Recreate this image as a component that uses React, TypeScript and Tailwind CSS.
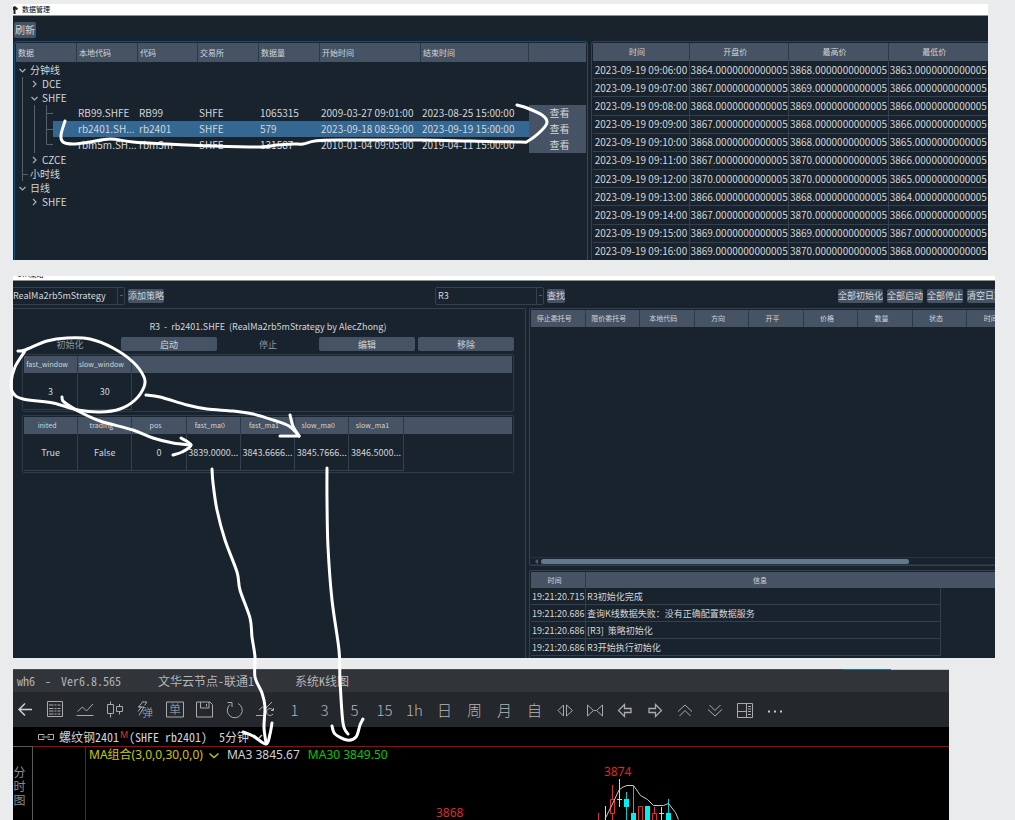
import React from "react";

type Point = [number, number];

/* ---------- Data manager ---------- */

const treeHeaders = ["数据", "本地代码", "代码", "交易所", "数据量", "开始时间", "结束时间", ""];

type TreeRow = {
  label?: string;
  depth?: number;
  guides: string;
  chevron?: string;
  cells?: string[];
  selected?: boolean;
};

const treeRows: TreeRow[] = [
  { label: "分钟线", depth: 0, guides: "", chevron: "M3.5 6l3 3 3-3" },
  { label: "DCE", depth: 1, guides: "M6.5 0V14", chevron: "M17 4l3 3-3 3" },
  { label: "SHFE", depth: 1, guides: "M6.5 0V14", chevron: "M15.5 6l3 3 3-3" },
  {
    guides: "M6.5 0V16M18.5 0V16M30.5 0V16M30.5 8.5H37",
    cells: ["RB99.SHFE", "RB99", "SHFE", "1065315", "2009-03-27 09:01:00", "2023-08-25 15:00:00"],
  },
  {
    guides: "M6.5 0V16M18.5 0V16M30.5 0V16M30.5 8.5H37",
    cells: ["rb2401.SH...", "rb2401", "SHFE", "579", "2023-09-18 08:59:00", "2023-09-19 15:00:00"],
    selected: true,
  },
  {
    guides: "M6.5 0V16M18.5 0V16M30.5 0V7.5H37",
    cells: ["rbm5m.SH...", "rbm5m", "SHFE", "131587", "2010-01-04 09:05:00", "2019-04-11 15:00:00"],
  },
  { label: "CZCE", depth: 1, guides: "M6.5 0V14", chevron: "M17 4l3 3-3 3" },
  { label: "小时线", depth: 0, guides: "M6.5 0V14M6.5 7.5H12" },
  { label: "日线", depth: 0, guides: "", chevron: "M3.5 6l3 3 3-3" },
  { label: "SHFE", depth: 1, guides: "", chevron: "M17 4l3 3-3 3" },
];

const bars = [
  ["06", 3864, 3868, 3863],
  ["07", 3867, 3869, 3866],
  ["08", 3868, 3869, 3866],
  ["09", 3867, 3868, 3866],
  ["10", 3868, 3868, 3865],
  ["11", 3867, 3870, 3866],
  ["12", 3870, 3870, 3865],
  ["13", 3866, 3868, 3864],
  ["14", 3867, 3870, 3866],
  ["15", 3869, 3869, 3867],
  ["16", 3869, 3870, 3868],
] as const;

function DataTree() {
  return (
    <div className="rounded-t-sm border border-b-0 border-[#17507f] p-px">
      <table className="w-full table-fixed border-separate border-spacing-0 text-left text-[10px] leading-none whitespace-nowrap">
        <colgroup>
          <col className="w-[61px]" />
          <col className="w-[61px]" />
          <col className="w-[60px]" />
          <col className="w-[61px]" />
          <col className="w-[61px]" />
          <col className="w-[101px]" />
          <col className="w-[108px]" />
          <col />
        </colgroup>
        <thead>
          <tr className="h-5 bg-[#455364] text-[8px]">
            {treeHeaders.map((h, i) => (
              <th
                key={i}
                className="border-r border-b border-r-[#2c3946] border-b-[#19232d] p-0 pl-0.5 font-normal last:border-r-0"
              >
                {h}
              </th>
            ))}
          </tr>
        </thead>
        <tbody>
          {treeRows.map((r, i) => (
            <tr key={i} className={r.cells ? "h-4" : "h-3.5"}>
              <td className="p-0" colSpan={r.cells ? 1 : 8}>
                <div className={r.cells ? "flex h-4 items-center" : "flex h-3.5 items-center"}>
                  <svg
                    className={
                      r.cells ? "h-4 w-[37px] shrink-0" : r.depth === 0 ? "h-3.5 w-3.5 shrink-0" : "h-3.5 w-[26px] shrink-0"
                    }
                    fill="none"
                    aria-hidden="true"
                  >
                    <path d={r.guides} stroke="#56616b" />
                    {r.chevron && <path d={r.chevron} stroke="#a9b0b6" strokeWidth="1.2" />}
                  </svg>
                  {r.cells ? (
                    <span className={r.selected ? "h-4 flex-1 bg-[#346792]" : "h-4 flex-1"} />
                  ) : (
                    <span>{r.label}</span>
                  )}
                </div>
              </td>
              {r.cells?.map((c, j) => (
                <td key={j} className={r.selected ? "bg-[#346792] p-0 pl-px" : "p-0 pl-px"}>
                  {c}
                </td>
              ))}
              {r.cells && (
                <td className="p-0">
                  <button type="button" className="block h-4 w-full bg-[#455364] pl-1 text-[10px] leading-none">
                    查看
                  </button>
                </td>
              )}
            </tr>
          ))}
        </tbody>
      </table>
    </div>
  );
}

function BarTable() {
  return (
    <div className="min-w-0 overflow-hidden rounded-tl-sm border-t border-l border-[#33414e] pt-px pl-px">
      <table className="h-[218px] w-full table-fixed border-separate border-spacing-0 text-center text-[10px] leading-none whitespace-nowrap">
        <colgroup>
          <col className="w-[97px]" />
          <col />
          <col />
          <col />
        </colgroup>
        <thead>
          <tr className="h-[18px] bg-[#455364] text-[8px]">
            {["时间", "开盘价", "最高价", "最低价"].map((h) => (
              <th key={h} className="border-r border-[#2c3946] p-0 pr-2 font-normal last:border-r-0">
                {h}
              </th>
            ))}
          </tr>
        </thead>
        <tbody>
          {bars.map(([m, ...prices]) => (
            <tr key={m}>
              <td className="border-r border-b border-[#33414e] p-0">{`2023-09-19 09:${m}:00`}</td>
              {prices.map((p, i) => (
                <td key={i} className="border-r border-b border-[#33414e] p-0 last:border-r-0">
                  {`${p}.0000000000005`}
                </td>
              ))}
            </tr>
          ))}
        </tbody>
      </table>
    </div>
  );
}

function DataManager() {
  return (
    <section className="mr-[27px] ml-[13px] h-64 overflow-hidden bg-[#19232d]">
      <header className="flex h-3 items-center gap-1 border-b border-[#8c948f] bg-white text-[7px] leading-none text-black">
        <svg className="h-2 w-[5px]" viewBox="0 0 5 8" aria-hidden="true">
          <path d="M0 1l2-1 3 2.5L4 4 2.500 3.500V8H.5V4L0 4z" fill="#222" />
        </svg>
        <h1>数据管理</h1>
      </header>
      <div className="pt-1.5 pb-[3px] pl-px">
        <button type="button" className="block h-4 w-[22px] rounded-xs bg-[#455364] text-center text-[10px] leading-none">
          刷新
        </button>
      </div>
      <div className="grid grid-cols-[574px_1fr] gap-[3px] pl-px">
        <DataTree />
        <BarTable />
      </div>
    </section>
  );
}

/* ---------- Strategy manager ---------- */

function ToolButton({ children }: { children: React.ReactNode }) {
  return (
    <button type="button" className="h-3.5 shrink-0 rounded-xs bg-[#455364] text-[9px] leading-none whitespace-nowrap">
      {children}
    </button>
  );
}

function Combo({ label, value, first }: { label: string; value: string; first?: boolean }) {
  return (
    <div
      className={
        first
          ? "flex h-[18px] w-[112px] shrink-0 rounded-r-xs border border-l-0 border-[#33414e]"
          : "flex h-[18px] w-[109px] shrink-0 rounded-xs border border-[#33414e]"
      }
    >
      <select
        aria-label={label}
        className={
          first
            ? "min-w-0 flex-1 appearance-none bg-transparent p-0 text-[9px] leading-4"
            : "min-w-0 flex-1 appearance-none bg-transparent p-0 pl-0.5 text-[9px] leading-4"
        }
      >
        <option>{value}</option>
      </select>
      <span className="flex w-[7px] items-center justify-center border-l border-[#33414e]">
        <span className="h-px w-[3px] bg-[#56616b]" />
      </span>
    </div>
  );
}

function ValueGrid({ columns, values }: { columns: string[]; values: string[] }) {
  const rest = 9 - columns.length;
  return (
    <div className="rounded-xs border border-[#2e3b48] p-px">
      <table className="w-full table-fixed border-separate border-spacing-0 text-center leading-none whitespace-nowrap">
        <colgroup>
          {Array.from({ length: 9 }, (_, i) => (
            <col key={i} className="w-1/9" />
          ))}
        </colgroup>
        <thead>
          <tr className="h-[17px] bg-[#455364] text-[7px]">
            {columns.map((c) => (
              <th key={c} className="border-r border-[#2c3946] p-0 pr-[7px] font-normal">
                {c}
              </th>
            ))}
            <td colSpan={rest} />
          </tr>
        </thead>
        <tbody>
          <tr className="h-[37px] text-[9px]">
            {values.map((v, i) => (
              <td key={i} className="border-r border-b border-[#33414e] p-0">
                {v}
              </td>
            ))}
            <td colSpan={rest} />
          </tr>
        </tbody>
      </table>
    </div>
  );
}

const actions = [
  { name: "初始化", enabled: false },
  { name: "启动", enabled: true },
  { name: "停止", enabled: false },
  { name: "编辑", enabled: true },
  { name: "移除", enabled: true },
];

const logs = [
  ["19:21:20.715", "R3初始化完成"],
  ["19:21:20.686", "查询K线数据失败：没有正确配置数据服务"],
  ["19:21:20.686", "[R3]  策略初始化"],
  ["19:21:20.686", "R3开始执行初始化"],
];

function StrategyManager() {
  return (
    <section className="mt-4 mr-5 ml-[13px] flex h-[382px] flex-col overflow-hidden bg-[#19232d]">
      <header className="flex h-[5px] shrink-0 items-end overflow-hidden border-b border-[#8c948f] bg-white pl-1 text-[7px] leading-none text-black">
        <span className="pb-0.5">CTA策略</span>
      </header>
      <div className="flex h-[27px] shrink-0 items-center gap-[3px] pt-0.5">
        <Combo label="策略类" value="RealMa2rb5mStrategy" first />
        <ToolButton>添加策略</ToolButton>
        <div className="ml-[268px] flex items-center gap-[3px]">
          <Combo label="策略实例" value="R3" />
          <ToolButton>查找</ToolButton>
        </div>
        <div className="-mr-2 ml-auto flex items-center gap-1">
          <ToolButton>全部初始化</ToolButton>
          <ToolButton>全部启动</ToolButton>
          <ToolButton>全部停止</ToolButton>
          <ToolButton>清空日志</ToolButton>
        </div>
      </div>
      <div className="grid min-h-0 flex-1 grid-cols-[513px_1fr] gap-[3px]">
        <div className="flex flex-col gap-[3px] rounded-tr-xs border-t border-r border-[#33414e] pr-[11px] pl-[9px]">
          <h2 className="pt-[13px] pb-0.5 text-center text-[9px] leading-[10px] whitespace-pre">
            R3  -  rb2401.SHFE  (RealMa2rb5mStrategy by AlecZhong)
          </h2>
          <div className="grid grid-cols-5 gap-[3px]">
            {actions.map((a) => (
              <button
                key={a.name}
                type="button"
                disabled={!a.enabled}
                className={
                  a.enabled
                    ? "h-3.5 rounded-xs bg-[#455364] text-[9px] leading-none"
                    : "h-3.5 text-[9px] leading-none text-[#8f979e]"
                }
              >
                {a.name}
              </button>
            ))}
          </div>
          <ValueGrid columns={["fast_window", "slow_window"]} values={["3", "30"]} />
          <ValueGrid
            columns={["inited", "trading", "pos", "fast_ma0", "fast_ma1", "slow_ma0", "slow_ma1"]}
            values={["True", "False", "0", "3839.0000...", "3843.6666...", "3845.7666...", "3846.5000..."]}
          />
        </div>
        <div className="flex min-w-0 flex-col gap-1 overflow-hidden">
          <div className="flex min-h-0 flex-1 flex-col justify-between rounded-l-xs border border-r-0 border-[#33414e] pt-px pl-px">
            <table className="w-[491px] table-fixed border-separate border-spacing-0 text-center text-[7px] leading-none whitespace-nowrap">
              <thead>
                <tr className="h-[17px] bg-[#455364]">
                  {["停止委托号", "限价委托号", "本地代码", "方向", "开平", "价格", "数量", "状态", "时间"].map((h) => (
                    <th key={h} className="border-r border-[#2c3946] p-0 pr-[7px] font-normal">
                      {h}
                    </th>
                  ))}
                </tr>
              </thead>
            </table>
            <div className="flex h-2 items-center gap-[3px] border-y border-[#26323e] pl-1">
              <svg className="h-[5px] w-[3px]" viewBox="0 0 3 5" aria-hidden="true">
                <path d="M3 0v5L0 2.500z" fill="#56616b" />
              </svg>
              <div className="h-[5px] w-4/5 rounded-full bg-[#60798b]" />
            </div>
          </div>
          <div className="h-[88px] shrink-0 overflow-hidden rounded-tl-xs border-t border-l border-[#33414e] pt-px pl-px">
            <table className="w-full table-fixed border-separate border-spacing-0 text-left text-[9px] leading-none whitespace-pre">
              <colgroup>
                <col className="w-[55px]" />
                <col />
                <col className="w-[54px]" />
              </colgroup>
              <thead>
                <tr className="h-4 bg-[#455364] text-center text-[7px]">
                  <th className="border-r border-[#2c3946] p-0 pr-[7px] font-normal">时间</th>
                  <th className="p-0 pr-[7px] font-normal">信息</th>
                  <td />
                </tr>
              </thead>
              <tbody>
                {logs.map(([t, m]) => (
                  <tr key={m} className="h-[17px]">
                    <td className="border-r border-b border-[#33414e] p-0 pl-px">{t}</td>
                    <td className="border-r border-b border-[#33414e] p-0 pl-px">{m}</td>
                    <td />
                  </tr>
                ))}
              </tbody>
            </table>
          </div>
        </div>
      </div>
    </section>
  );
}

/* ---------- Chart terminal ---------- */

const tools: { name: string; text?: string; icon?: React.ReactNode }[] = [
  { name: "后退", icon: <path d="M16 9.500H3M9 3.500l-6 6 6 6" stroke="#d0d2d4" strokeWidth="1.5" /> },
  {
    name: "报价列表",
    icon: <path d="M2.500 1.500h15v15h-15zM4 5h4.500M9.500 5h2M12.500 5h3M4 8.500h4.500M9.500 8.500h2M12.500 8.500h3M4 11h4.500M9.500 11h2M12.500 11h3M4 14h4.500M9.500 14h2M12.500 14h3" />,
  },
  { name: "分时", icon: <path d="M1.500 15.500h17M2.500 11.500L7.500 7l4 4L18 4" /> },
  { name: "K线", icon: <path d="M2.500 4.500h6v9h-6zM5.500 1.500v3M5.500 13.500v4M11.500 6.500h6v5h-6zM14.500 4v2.500M14.500 11.500v3" /> },
  {
    name: "弹窗",
    icon: (
      <>
        <path d="M8 1.500L3.500 7H9L4 15.500M3.500 7h3L3 11.500" />
        <path d="M7.500 2H12L9.500 5.500" />
        <text x="7" y="17" fontSize="11" fill="#b0b2b4" stroke="none">弹</text>
      </>
    ),
  },
  {
    name: "下单",
    icon: (
      <>
        <path d="M1.500 10V2h17v8M1.500 10v7h17v-7" />
        <text x="4" y="14" fontSize="12" fill="#b0b2b4" stroke="none">单</text>
      </>
    ),
  },
  { name: "保存", icon: <path d="M1.500 2h13.500l2.500 2.500v12.500h-16zM5.500 2v6h8.500V2M11.500 4v2.500" /> },
  { name: "刷新行情", icon: <path d="M13 3.500A7.500 7.500 0 1 1 5 4.500M2.500 2.500h4.500v4.500" /> },
  { name: "复权", icon: <path d="M1 15.500h9M4 10l3.500-3 2.500 2L17 2M18 10a3.500 3.500 0 1 0 0 4M18.500 8v2.500H16" /> },
  { name: "1分钟", text: "1" },
  { name: "3分钟", text: "3" },
  { name: "5分钟", text: "5" },
  { name: "15分钟", text: "15" },
  { name: "1小时", text: "1h" },
  { name: "日线", text: "日" },
  { name: "周线", text: "周" },
  { name: "月线", text: "月" },
  { name: "自定义", text: "自" },
  { name: "放大", icon: <path d="M8.500 5v11L3 10.500zM11.500 5v11l6-5.500z" /> },
  { name: "缩小", icon: <path d="M2.500 5v11l6-5.500zM17.500 5v11l-6-5.500zM8.500 10.500h3" /> },
  { name: "左移", icon: <path d="M9.500 4.500l-6 6 6 6v-4H16v-4H9.500z" strokeWidth="1.300" /> },
  { name: "右移", icon: <path d="M10.500 4.500l6 6-6 6v-4H4v-4h6.500z" strokeWidth="1.300" /> },
  { name: "向上", icon: <path d="M3 11.500l7-6.500 7 6.500M4.500 16l5.500-5.500 5.500 5.500" /> },
  { name: "向下", icon: <path d="M3 9.500l7 6.500 7-6.500M4.500 5l5.500 5.500L15.500 5" /> },
  { name: "布局", icon: <path d="M2.500 3.500h15v14h-15zM11.500 3.500v14M2.500 11.500h9M13 6.500h3M13 9h3M13 11.500h3M13 14.500h3" /> },
  {
    name: "更多",
    icon: <path d="M3 11.500h2M9 11.500h2M15 11.500h2" stroke="#c4c6c8" strokeWidth="2" />,
  },
];

function CandleChart() {
  return (
    <svg className="absolute top-0 left-0 h-[73px] w-[863px]" viewBox="86 747 863 73" fill="none" aria-label="K线图">
      <g stroke="#e03030">
        <path d="M598.500 813v7M612.500 785v14M612.500 813v7M654.500 807v6" />
        <path d="M610.500 799.500h4v14h-4zM638.500 806.500h4v16h-4zM652.500 813.500h4v9h-4z" />
      </g>
      <g stroke="#d8d8d8">
        <path d="M605.500 806v14M619.500 779v28M617 799.500h5M661.500 807v13M659 813.500h5" />
      </g>
      <g stroke="#00c8c8">
        <path d="M626.500 792v28M633.500 786v34M668.500 799v21" />
      </g>
      <path d="M624 799h5v8h-5zM631 813h5v8h-5zM645 806h5v14h-5zM666 813h5v8h-5z" fill="#00f0f0" />
      <path
        d="M605 819l7-14 7-15 4-3 4-1.500h6.500l7 10 7 4 6 6h10l5-2 7 9 3 7"
        stroke="#c8c8c8"
      />
      <g fill="#d82c2c" fontSize="12" fontFamily="'Noto Sans', sans-serif">
        <text x="604" y="776">3874</text>
        <text x="436" y="817">3868</text>
      </g>
    </svg>
  );
}

const mono = { fontFamily: "'Noto Sans Mono CJK SC', 'Noto Sans CJK SC', monospace" };
const legend = { fontFamily: "'Noto Sans', 'Noto Sans CJK SC', sans-serif" };

function ChartTerminal() {
  return (
    <section className="mt-[11px] mr-[66px] ml-[13px] flex min-h-[151px] flex-1 flex-col overflow-hidden bg-black text-[12px] leading-none whitespace-pre">
      <div className="flex h-px shrink-0 justify-end bg-[#4a4d50]">
        <span className="h-px w-12 bg-[#1a74bd]" />
        <span className="h-px w-[58px] bg-[#c4c7ca]" />
      </div>
      <header className="flex h-[22px] shrink-0 items-center bg-[#313439] pl-1 text-[#b4b6b8]" style={mono}>
        <span className="flex w-[141px] gap-2.5">
          <span>wh6</span>
          <span>-</span>
          <span>Ver6.8.565</span>
        </span>
        <span className="w-[137px]">文华云节点-联通1</span>
        <span>系统K线图</span>
      </header>
      <nav className="flex h-[35px] shrink-0 items-center bg-[#24272c]">
        {tools.map((t, i) => (
          <button
            key={t.name}
            type="button"
            aria-label={t.name}
            className={
              i === 0
                ? "flex h-8 w-[27px] shrink-0 items-center justify-center pr-0.5"
                : "flex h-8 w-[30px] shrink-0 items-center justify-center pr-px text-[15px] font-light text-[#b4b6b8]"
            }
          >
            {t.text ?? (
              <svg className="h-5 w-5" viewBox="0 0 20 20" fill="none" stroke="#a8aaac">
                {t.icon}
              </svg>
            )}
          </button>
        ))}
      </nav>
      <div className="flex h-[19px] shrink-0 items-center pl-6 text-[#d4d4d4]" style={mono}>
        <svg className="mr-1 h-2 w-[18px]" viewBox="0 0 18 8" fill="none" stroke="#b0b0b0" aria-hidden="true">
          <path d="M7 2.500V1.500H1.500v5H7V5.500M11 2.500V1.500h5.500v5H11V5.500M5 4h8" />
        </svg>
        <span>螺纹钢2401</span>
        <span className="mb-1 w-2.5 pl-px text-[9px] text-[#e03030]" style={legend}>M</span>
        <span>(SHFE rb2401)  5分钟</span>
        <svg className="ml-1 h-2 w-2.5" viewBox="0 0 10 8" fill="none" stroke="#d4d4d4" aria-hidden="true">
          <path d="M1 2l4 4 4-4" strokeWidth="1.300" />
        </svg>
      </div>
      <div className="flex min-h-0 flex-1">
        <div className="flex w-5 shrink-0 flex-col items-center border-t border-r border-[#5a5a5a] pt-[18px] pr-1.5 text-[12px] leading-[14px] text-[#8c8c8c]">
          <span>分</span>
          <span>时</span>
          <span>图</span>
        </div>
        <div className="flex min-w-0 flex-1 border-t border-[#b00000] pl-[52px]">
          <div className="relative min-w-0 flex-1 overflow-hidden border-l border-[#b00000] pl-[3px]">
            <CandleChart />
            <div className="flex h-4 items-center" style={legend}>
              <span className="text-[#c8c800]">MA组合(3,0,0,30,0,0)</span>
              <svg className="ml-1.5 h-2 w-2.5" viewBox="0 0 10 8" fill="none" stroke="#c8c800" aria-hidden="true">
                <path d="M.5 2.500l4.500 4 4.500-4" strokeWidth="1.400" />
              </svg>
              <span className="ml-2 text-[#d0d0d0]">MA3 3845.67</span>
              <span className="ml-2 text-[#00c800]">MA30 3849.50</span>
            </div>
          </div>
        </div>
      </div>
    </section>
  );
}

/* ---------- Hand-drawn notes ---------- */

const strokes: Point[][] = [
  [[65, 121], [61, 135], [63, 142], [73, 144], [90, 142], [110, 139], [133, 142], [167, 144], [213, 146], [260, 147], [277, 145], [293, 144], [303, 144], [315, 141], [338, 140], [420, 140], [470, 141], [520, 142], [528, 141], [542, 130], [547, 122], [542, 115], [527, 108], [517, 105]],
  [[18, 351], [25, 350], [47, 341], [67, 338], [90, 339], [113, 348], [133, 362], [144, 377], [144, 387], [135, 400], [120, 409], [100, 412], [78, 410], [53, 403], [23, 399], [13, 393], [11, 383], [15, 367], [25, 351]],
  [[62, 397], [64, 402], [80, 412], [100, 421], [133, 430], [153, 438], [173, 443], [191, 445]],
  [[181, 438], [191, 445], [182, 452], [173, 455]],
  [[146, 395], [160, 397], [187, 405], [207, 409], [233, 411], [253, 414], [273, 420], [289, 426], [299, 436]],
  [[290, 415], [293, 426], [299, 436]],
  [[299, 436], [280, 436]],
  [[212, 469], [213, 483], [217, 510], [225, 540], [237, 572], [240, 590], [250, 618], [252, 637], [255, 657], [255, 677], [262, 693], [265, 707], [264, 727], [266, 743]],
  [[243, 732], [253, 736], [266, 744], [270, 734], [272, 723]],
  [[327, 468], [327, 500], [328, 547], [332, 600], [339, 650], [340, 680], [343, 723], [348, 734]],
  [[332, 726], [335, 734], [347, 740], [356, 737], [360, 725], [363, 719]],
];

function smooth(pts: Point[]): string {
  let d = `M${pts[0][0]} ${pts[0][1]}`;
  for (let i = 0; i < pts.length - 1; i++) {
    const a = pts[i - 1] ?? pts[i];
    const b = pts[i];
    const c = pts[i + 1];
    const e = pts[i + 2] ?? c;
    d += `C${b[0] + (c[0] - a[0]) / 6} ${b[1] + (c[1] - a[1]) / 6} ${c[0] - (e[0] - b[0]) / 6} ${c[1] - (e[1] - b[1]) / 6} ${c[0]} ${c[1]}`;
  }
  return d;
}

function Notes() {
  return (
    <svg
      className="pointer-events-none absolute top-0 left-0 h-[820px] w-[1015px]"
      viewBox="0 0 1015 820"
      fill="none"
      stroke="#fff"
      strokeWidth="3"
      strokeLinecap="round"
      strokeLinejoin="round"
      aria-hidden="true"
    >
      {strokes.map((s, i) => (
        <path key={i} d={smooth(s)} />
      ))}
    </svg>
  );
}

export default function App() {
  return (
    <main className="relative flex min-h-screen flex-col bg-[#eaebed] pt-1 font-['Noto_Sans_CJK_SC',sans-serif] text-[#d3d6d8]">
      <DataManager />
      <StrategyManager />
      <ChartTerminal />
      <Notes />
    </main>
  );
}
